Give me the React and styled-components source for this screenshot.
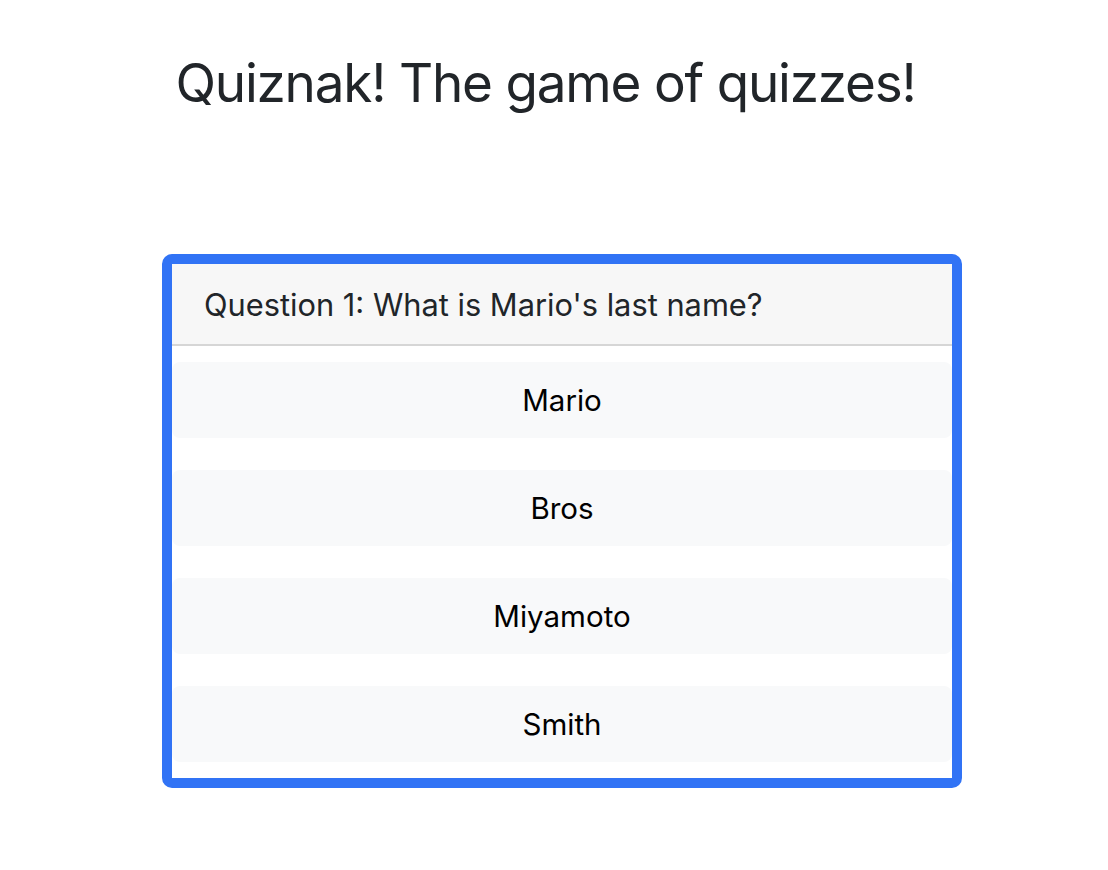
import styled, { createGlobalStyle } from 'styled-components'

const GlobalStyle = createGlobalStyle`
    body {
        margin: 0;
        background: #fff;
        font-family: Inter, "Noto Sans", "Liberation Sans", sans-serif;
        color: #212529;
    }
`

const answers = ['Mario', 'Bros', 'Miyamoto', 'Smith']

export default function App() {
    return (
        <Page>
            <GlobalStyle />
            <Title>Quiznak! The game of quizzes!</Title>
            <Card>
                <CardHeader>Question 1: What is Mario's last name?</CardHeader>
                <Answers>
                    {answers.map(a => (
                        <Answer key={a}>{a}</Answer>
                    ))}
                </Answers>
            </Card>
        </Page>
    )
}

const Page = styled.div`
    display: flex;
    flex-direction: column;
    align-items: flex-start;
    padding-top: 51px;
`
const Title = styled.h1`
    align-self: stretch;
    margin: 0 0 139px;
    padding-right: 17px;
    text-align: center;
    font-size: 53px;
    font-weight: 400;
    letter-spacing: -1.2px;
    line-height: 64px;
    color: #212529;
`
const Card = styled.div`
    box-sizing: border-box;
    width: 800px;
    margin-left: 162px;
    border: 10px solid #3173f5;
    border-radius: 10px;
    overflow: hidden;
    background: #fff;
`
const CardHeader = styled.div`
    height: 80px;
    display: flex;
    align-items: center;
    padding: 0 32px;
    background: #f7f7f7;
    border-bottom: 2px solid #d6d6d6;
    font-size: 30.8px;
    color: #212529;
`
const Answers = styled.div`
    display: flex;
    flex-direction: column;
    gap: 32px;
    padding: 16px 0;
`
const Answer = styled.button`
    height: 76px;
    border: none;
    border-radius: 8px;
    background: #f8f9fa;
    font-family: inherit;
    font-size: 29.5px;
    color: #000;
    cursor: pointer;
`
